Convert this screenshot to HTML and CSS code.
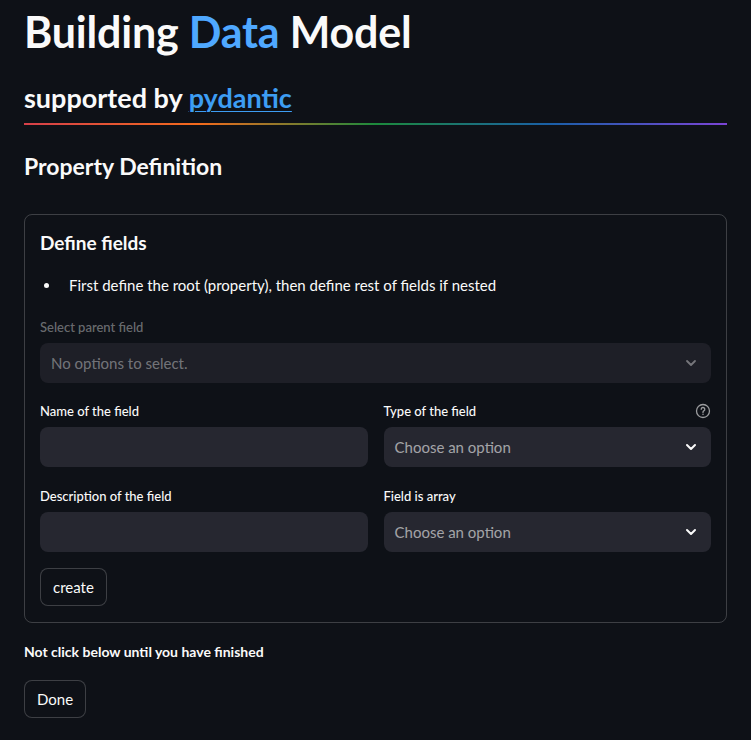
FILE: index.html
```html
<!DOCTYPE html>
<html>
<head>
<meta charset="utf-8">
<link rel="stylesheet" href="styles.css">
</head>
<body>
<main class="page">
  <h1 class="title">Building <span class="accent">Data</span> Model</h1>
  <h2 class="subtitle">supported by <a class="link" href="#">pydantic</a></h2>
  <hr class="rainbow">
  <h3 class="section">Property Definition</h3>
  <section class="form">
    <h4 class="form-title">Define fields</h4>
    <ul class="list"><li>First define the root (property), then define rest of fields if nested</li></ul>
    <div class="field">
      <label class="label disabled">Select parent field</label>
      <div class="select disabled"><span>No options to select.</span>
        <svg class="chev" width="16" height="16" viewBox="0 0 16 16"><path d="M4 6l4 4 4-4" fill="none" stroke="currentColor" stroke-width="1.8" stroke-linecap="round" stroke-linejoin="round"/></svg>
      </div>
    </div>
    <div class="grid">
      <div class="field">
        <label class="label">Name of the field</label>
        <div class="input"></div>
      </div>
      <div class="field">
        <div class="label-row"><label class="label">Type of the field</label>
          <svg class="help" width="16" height="16" viewBox="0 0 16 16"><circle cx="8" cy="8" r="6.5" fill="none" stroke="currentColor" stroke-width="1.3"/><path d="M6.2 6.3a1.8 1.8 0 1 1 2.6 1.6c-.5.3-.8.6-.8 1.2v.3" fill="none" stroke="currentColor" stroke-width="1.3" stroke-linecap="round"/><circle cx="8" cy="11.3" r=".8" fill="currentColor"/></svg>
        </div>
        <div class="select"><span>Choose an option</span>
          <svg class="chev" width="16" height="16" viewBox="0 0 16 16"><path d="M4 6l4 4 4-4" fill="none" stroke="currentColor" stroke-width="2" stroke-linecap="round" stroke-linejoin="round"/></svg>
        </div>
      </div>
      <div class="field">
        <label class="label">Description of the field</label>
        <div class="input"></div>
      </div>
      <div class="field">
        <label class="label">Field is array</label>
        <div class="select"><span>Choose an option</span>
          <svg class="chev" width="16" height="16" viewBox="0 0 16 16"><path d="M4 6l4 4 4-4" fill="none" stroke="currentColor" stroke-width="2" stroke-linecap="round" stroke-linejoin="round"/></svg>
        </div>
      </div>
    </div>
    <button class="btn">create</button>
  </section>
  <p class="note">Not click below until you have finished</p>
  <button class="btn">Done</button>
</main>
</body>
</html>
```
FILE: styles.css
```css
* { box-sizing: border-box; }
html, body { margin: 0; padding: 0; background: #0e1117; }
body {
  color: #fafafa;
  font-family: "Lato", "Noto Sans", sans-serif;
  width: 751px; height: 740px; overflow: hidden;
}
.page { padding: 0 24px; display: flex; flex-direction: column; }
.title { margin: 8px 0 0; font-size: 43px; font-weight: 700; line-height: 48px; letter-spacing: -0.2px; }
.accent { color: #4fa8ff; }
.subtitle { margin: 24px 0 0; font-size: 27px; font-weight: 700; line-height: 36px; }
.link { color: #3d9df3; text-decoration: underline; text-underline-offset: 3px; text-decoration-thickness: 1px; }
.rainbow {
  margin: 7px 0 0; border: 0; height: 2px;
  background: linear-gradient(90deg, #d6404a, #f36b1c 25%, #1c8a3c 50%, #1a5fa8 75%, #7b44d6);
}
.section { margin: 25px 0 0; font-size: 23px; font-weight: 700; line-height: 32px; }
.form {
  margin-top: 32px; border: 1px solid rgba(250,250,250,0.2); border-radius: 8px;
  padding: 14px 15px 16px;
  display: flex; flex-direction: column;
}
.form-title { margin: 0; font-size: 19px; font-weight: 700; line-height: 28px; }
.list { margin: 17px 0 0; padding-left: 29px; font-size: 15px; line-height: 22px; list-style: none; }
.list li { position: relative; }
.list li::before {
  content: ""; position: absolute; left: -25px; top: 9px;
  width: 5px; height: 5px; border-radius: 50%; background: #fafafa;
}
.field { display: flex; flex-direction: column; }
.form > .field { margin-top: 23px; }
.label { font-size: 13px; line-height: 16px; margin-bottom: 8px; font-weight: 500; }
.label.disabled { color: rgba(250,250,250,0.4); }
.label-row { display: flex; justify-content: space-between; align-items: flex-start; }
.help { color: rgba(250,250,250,0.6); }
.select, .input {
  height: 40px; border-radius: 8px; background: #262730;
  display: flex; align-items: center; justify-content: space-between;
  padding: 0 12px 0 11px; font-size: 15px; color: rgba(250,250,250,0.6);
}
.select.disabled { color: rgba(250,250,250,0.4); background: #1e1f27; }
.select.disabled .chev { color: rgba(250,250,250,0.4); }
.chev { color: #fafafa; }
.grid { display: grid; grid-template-columns: 1fr 1fr; column-gap: 16px; row-gap: 21px; margin-top: 20px; }
.btn {
  align-self: flex-start; font: inherit; font-size: 15px; color: #fafafa;
  background: #0e1117; border: 1px solid rgba(250,250,250,0.2); border-radius: 8px;
  height: 38px; padding: 0 12px; margin-top: 16px;
}
.note { margin: 19px 0 0; font-size: 14px; font-weight: 700; line-height: 20px; }
.page > .btn { margin-top: 18px; }
```
